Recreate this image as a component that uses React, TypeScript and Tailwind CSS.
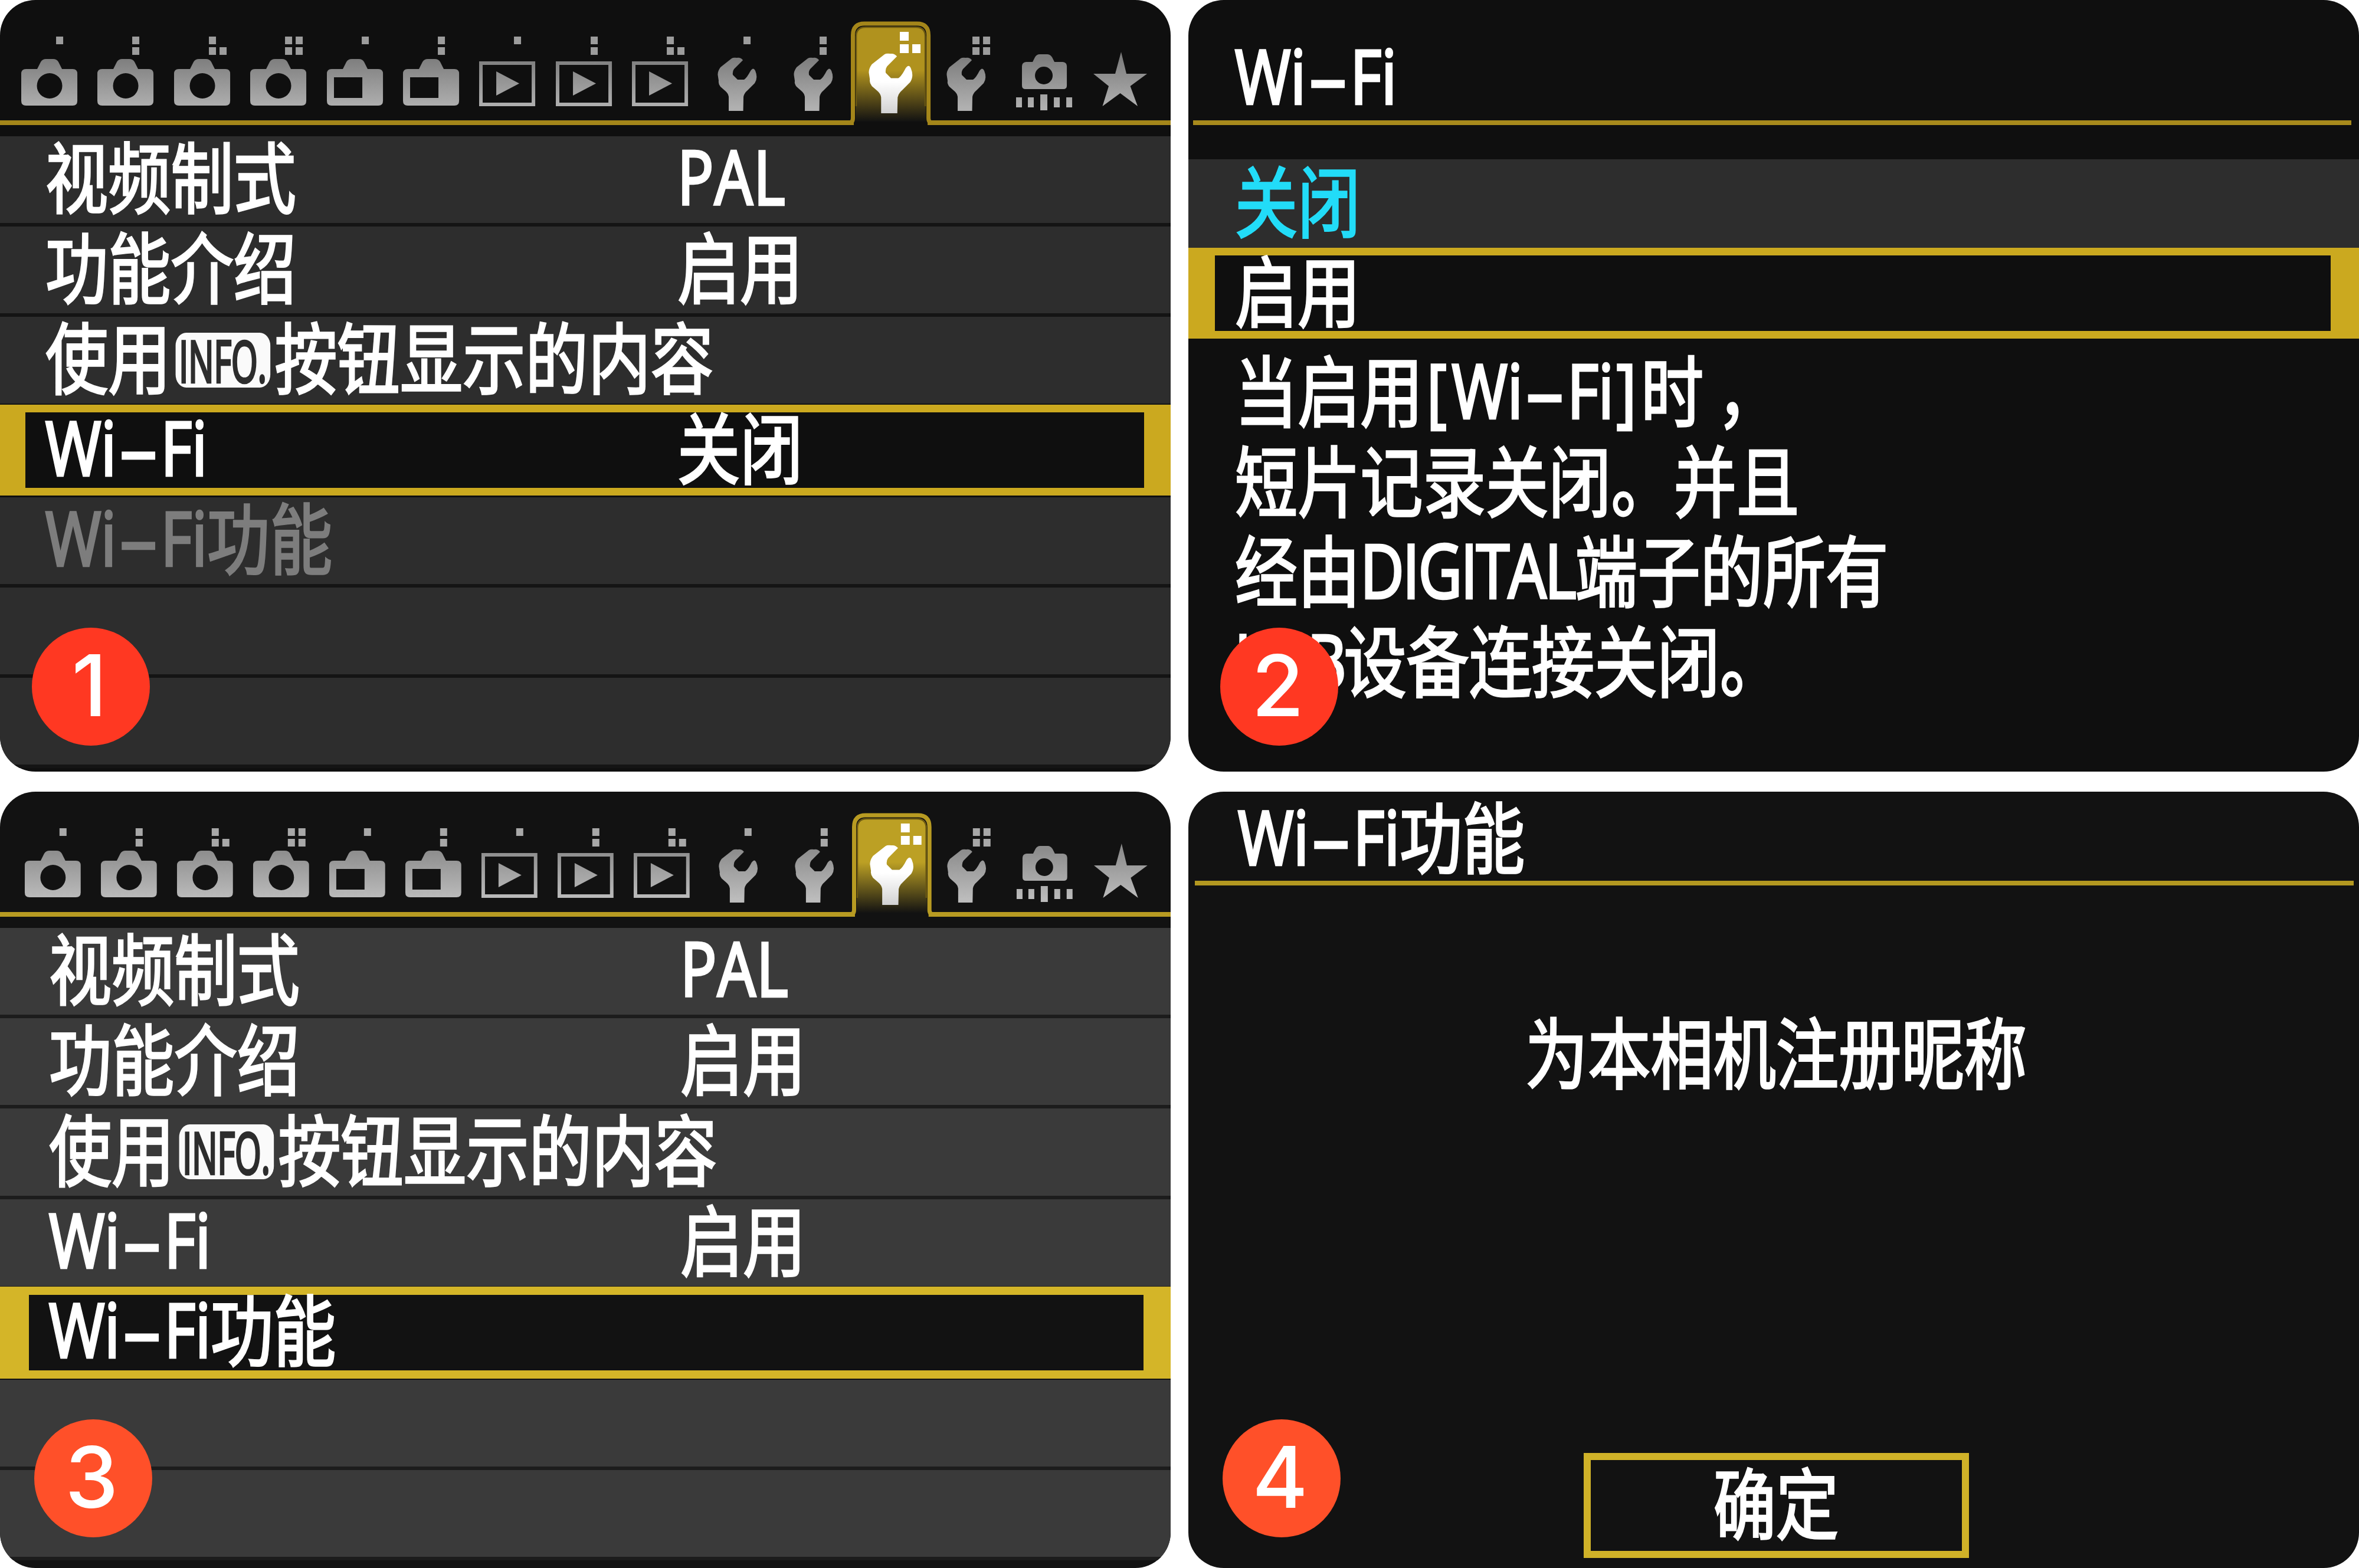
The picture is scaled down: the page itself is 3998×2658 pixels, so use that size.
import type { ReactNode } from "react";

type IconKind = "camera" | "movie" | "play" | "wrench" | "custom" | "star";

const tabs: { kind: IconKind; dots: number; active?: boolean }[] = [
  { kind: "camera", dots: 1 },
  { kind: "camera", dots: 2 },
  { kind: "camera", dots: 3 },
  { kind: "camera", dots: 4 },
  { kind: "movie", dots: 1 },
  { kind: "movie", dots: 2 },
  { kind: "play", dots: 1 },
  { kind: "play", dots: 2 },
  { kind: "play", dots: 3 },
  { kind: "wrench", dots: 1 },
  { kind: "wrench", dots: 2 },
  { kind: "wrench", dots: 3, active: true },
  { kind: "wrench", dots: 4 },
  { kind: "custom", dots: 0 },
  { kind: "star", dots: 0 },
];

// order in which the page dots of a tab fill up
const dotSpots = [
  [59, 62],
  [59, 80],
  [77, 80],
  [77, 62],
];

const WRENCH =
  "M48 98 Q54 97 58 102 L43 117 Q40 121 41 127 L49 135 L60 135 Q65 132 71 120 Q76 113 79 120 Q84 132 78 141 L66 153 Q60 158 59 164 L58.5 188 L34 188 L34 164 Q33 158 28 154 L20 147 Q16 142 17 137 L15.5 127 Q15 121 20 114 L39 99 Q42 97 48 98 Z";

const Glyph = ({ kind, fill }: { kind: IconKind; fill: string }) => {
  switch (kind) {
    case "camera":
      return (
        <path
          fill={fill}
          fillRule="evenodd"
          d="M27 117 L33 105 Q36 100 42 100 H54 Q60 100 63 105 L69 117 H87 Q95 117 95 125 V171 Q95 179 87 179 H8 Q0 179 0 171 V125 Q0 117 8 117 Z M48 124 A21 21 0 1 0 48 167 A21 21 0 1 0 48 124 Z"
        />
      );
    case "movie":
      return (
        <path
          fill={fill}
          fillRule="evenodd"
          d="M27 117 L33 105 Q36 100 42 100 H54 Q60 100 63 105 L69 117 H87 Q95 117 95 125 V171 Q95 179 87 179 H8 Q0 179 0 171 V125 Q0 117 8 117 Z M12 131 V166 H60 V131 Z"
        />
      );
    case "play":
      return (
        <>
          <rect x="3" y="107" width="89" height="70" fill="none" stroke={fill} strokeWidth="6" />
          <path fill={fill} d="M29 121 L68 141.500 L29 162 Z" />
        </>
      );
    case "wrench":
      return <path fill={fill} d={WRENCH} />;
    case "custom":
      return (
        <path
          fill={fill}
          fillRule="evenodd"
          d="M32 105 L36 97 Q39 92 44 92 H57 Q62 92 65 97 L69 105 H83 Q90 106 90 112 V145 Q90 151 84 151 H20 Q14 151 14 145 V112 Q14 106 21 105 Z M51 113 A15 15 0 1 0 51 143 A15 15 0 1 0 51 113 Z M4 165 h10 v17 h-10 Z M24 165 h10 v17 h-10 Z M45 160 h12 v27 h-12 Z M68 165 h10 v17 h-10 Z M89 165 h10 v17 h-10 Z"
        />
      );
    case "star":
      return (
        <path
          fill={fill}
          d="M53 88 L62 125 H97 L68.500 146 L81 180 L51.500 158 L21.500 180 L32 146 L6 125 H43 Z"
        />
      );
  }
};

const TabBar = ({ id, bright }: { id: string; bright?: boolean }) => {
  const gold = bright ? "#b89b22" : "#a4861a";
  const gray = `url(#${id}-gray)`;
  return (
    <div
      className={`relative flex h-[231px] shrink-0 ${bright ? "pl-[26px]" : "pl-[20px]"}`}
    >
      <div
        className={`absolute inset-x-0 top-[204px] h-2 ${bright ? "bg-[#b89b22]" : "bg-[#a4861a]"}`}
      />
      {tabs.map((tab, i) => (
        <svg
          key={i}
          viewBox="-16 0 129.3 231"
          preserveAspectRatio="none"
          className={`relative h-[231px] shrink-0 overflow-visible ${
            bright ? "w-[129px]" : "w-[129.4px]"
          }`}
        >
          {i === 0 && (
            <defs>
              <linearGradient id={`${id}-gray`} gradientUnits="userSpaceOnUse" x1="0" y1="98" x2="0" y2="182">
                <stop offset="0" stopColor={bright ? "#8c8c8c" : "#7d7d7d"} />
                <stop offset="1" stopColor={bright ? "#bcbcbc" : "#b0b0b0"} />
              </linearGradient>
              <linearGradient id={`${id}-gold`} gradientUnits="userSpaceOnUse" x1="0" y1="46" x2="0" y2="206">
                <stop offset="0" stopColor={bright ? "#bca024" : "#b0921e"} />
                <stop offset="0.46" stopColor={bright ? "#bca024" : "#b0921e"} />
                <stop offset="1" stopColor="#121212" />
              </linearGradient>
              <linearGradient id={`${id}-white`} gradientUnits="userSpaceOnUse" x1="0" y1="140" x2="0" y2="190">
                <stop offset="0" stopColor="#ffffff" />
                <stop offset="1" stopColor="#d0d0d0" />
              </linearGradient>
            </defs>
          )}
          {tab.active ? (
            <>
              <rect x="-12" y="196" width="125" height="18" fill={bright ? "#121212" : "#0f0f0f"} />
              <path
                d="M-20 208 Q-13.500 208 -13.500 200 V60 Q-13.500 40 6 40 H95 Q114.500 40 114.500 60 V200 Q114.500 208 121 208"
                fill="none"
                stroke={gold}
                strokeWidth="7"
              />
              <path
                d="M-9 206 V62 Q-9 45 8 45 H93 Q110 45 110 62 V206 Z"
                fill={`url(#${id}-gold)`}
              />
              <path
                d="M-8 180 V62 Q-8 46 8 46 H93 Q109 46 109 62 V180"
                fill="none"
                stroke="#6b5812"
                strokeWidth="2.500"
              />
              <rect x="66" y="54" width="15" height="15" fill="#fff" />
              <rect x="66" y="75" width="15" height="15" fill="#fff" />
              <rect x="87" y="75" width="14" height="15" fill="#fff" />
              <g transform="translate(50.5 141.5) scale(1.12) translate(-48.5 -143)">
                <Glyph kind="wrench" fill={`url(#${id}-white)`} />
              </g>
            </>
          ) : (
            <>
              {dotSpots.slice(0, tab.dots).map(([x, y]) => (
                <rect
                  key={`${x}-${y}`}
                  x={x}
                  y={y}
                  width="12"
                  height="13"
                  fill={bright ? "#a8a8a8" : "#9c9c9c"}
                />
              ))}
              <Glyph kind={tab.kind} fill={gray} />
            </>
          )}
        </svg>
      ))}
    </div>
  );
};

// The camera's font is narrow, so every line is squeezed horizontally
const Line = ({ children, className = "origin-left" }: { children: ReactNode; className?: string }) => (
  <div
    className={`w-max scale-x-[0.811] pb-[8px] text-[131px] leading-[144.7px] font-normal whitespace-nowrap [-webkit-text-stroke:3.4px_currentColor] ${className}`}
  >
    {children}
  </div>
);

const Latin = ({ children, className = "" }: { children: ReactNode; className?: string }) => (
  <span
    className={`align-[4px] text-[126px] leading-[0] font-medium [-webkit-text-stroke:4.5px_currentColor] ${className}`}
  >
    {children}
  </span>
);

const WiFi = () => (
  <Latin>
    Wi
    <span className="inline-block w-[93px] scale-x-[1.22] text-center">–</span>
    Fi
  </Latin>
);

const InfoLabel = () => (
  <span className="flex items-center">
    <span>使用</span>
    <span className="mt-[8px] mr-[9px] ml-[10px] flex h-[93px] w-[198px] items-center justify-center rounded-[22px] bg-[#fafafa] text-[#2d2d2d]">
      <span className="scale-x-[0.73] text-[97px] leading-[93px] [-webkit-text-stroke:4.5px_currentColor]">
        INFO.
      </span>
    </span>
    <span>按钮显示的内容</span>
  </span>
);

const Pal = () => <Latin className="tracking-[2px]">PAL</Latin>;

const Badge = ({ n, className }: { n: number; className: string }) => (
  <div
    className={`absolute top-[1064px] flex size-[200px] items-center justify-center rounded-full pr-[5px] pb-[4px] font-['Inter',sans-serif] text-[144px] leading-none font-medium text-white ${className}`}
  >
    {n}
  </div>
);

const Screen = ({ children, className }: { children: ReactNode; className: string }) => (
  <section
    className={`relative flex w-[1984px] flex-col overflow-hidden rounded-[60px] ${className}`}
  >
    {children}
  </section>
);

type Item = { label: ReactNode; value?: ReactNode; state?: "active" | "disabled" };

const MenuScreen = ({ id, items, bright, n }: { id: string; items: Item[]; bright?: boolean; n: number }) => {
  const textPad = bright ? "pl-[83px]" : "pl-[77px]";
  const labelWidth = bright ? "w-[1070px]" : "w-[1071px]";
  return (
    <Screen className={bright ? "h-[1316px] bg-[#121212]" : "h-[1308px] bg-[#0f0f0f]"}>
      <TabBar id={id} bright={bright} />
      {items.map((item, i) => {
        const content = (
          <>
            <div className={`shrink-0 ${labelWidth}`}>
              <Line>{item.label}</Line>
            </div>
            {item.value && <Line>{item.value}</Line>}
          </>
        );
        if (item.state === "active") {
          return (
            <div
              key={i}
              className={`relative flex shrink-0 ${
                bright
                  ? "-mt-[5px] mb-[2px] h-[156px] bg-[#d4b528] py-[14px] pr-[46px] pl-[49px]"
                  : "-mt-[4px] mb-[3px] h-[154px] bg-[#cba91f] py-[13px] pr-[45px] pl-[43px]"
              }`}
            >
              <div
                className={`flex flex-1 items-center pl-[34px] ${bright ? "bg-[#121212]" : "bg-[#0f0f0f]"}`}
              >
                {content}
              </div>
            </div>
          );
        }
        return (
          <div
            key={i}
            className={`flex shrink-0 items-center border-b-[6px] ${textPad} ${
              bright
                ? "h-[153.2px] border-[#1c1c1c] bg-[#3a3a3a]"
                : "h-[153px] border-[#141414] bg-[#2d2d2d]"
            } ${item.state === "disabled" ? "text-[#7d7d7d]" : "text-white"}`}
          >
            {content}
          </div>
        );
      })}
      <Badge n={n} className={bright ? "left-[58px] bg-[#ff5029]" : "left-[54px] bg-[#ff3822]"} />
    </Screen>
  );
};

const menuOff: Item[] = [
  { label: "视频制式", value: <Pal /> },
  { label: "功能介绍", value: "启用" },
  { label: <InfoLabel /> },
  { label: <WiFi />, value: "关闭", state: "active" },
  { label: <><WiFi />功能</>, state: "disabled" },
  { label: "" },
  { label: "" },
];

const menuOn: Item[] = [
  { label: "视频制式", value: <Pal /> },
  { label: "功能介绍", value: "启用" },
  { label: <InfoLabel /> },
  { label: <WiFi />, value: "启用" },
  { label: <><WiFi />功能</>, state: "active" },
  { label: "" },
  { label: "" },
];

const WifiSettingScreen = () => (
  <Screen className="h-[1308px] bg-[#0f0f0f]">
    <div className="flex h-[204px] shrink-0 items-center pt-[62px] pl-[79px]">
      <Line><WiFi /></Line>
    </div>
    <div className="mr-[13px] ml-[8px] h-2 shrink-0 bg-[#a88a1c]" />
    <div className="mt-[58px] flex h-[150px] shrink-0 items-center bg-[#2d2d2d] pl-[79px] text-[#22dcf8]">
      <Line>关闭</Line>
    </div>
    <div className="flex h-[154px] shrink-0 bg-[#cba91f] py-[13px] pr-[48px] pl-[45px]">
      <div className="flex flex-1 items-center bg-[#0f0f0f] pl-[34px]">
        <Line>启用</Line>
      </div>
    </div>
    <div className="flex flex-col pt-[16px] pl-[79px]">
      <Line>
        当启用
        <Latin className="mr-[11px] ml-[8px]">[</Latin>
        <WiFi />
        <Latin className="mr-[10px] ml-[6px]">]</Latin>
        时<span className="ml-[28px]">，</span>
      </Line>
      <Line>短片记录关闭。并且</Line>
      <Line>
        经由<Latin className="tracking-[-2.8px]">DIGITAL</Latin>端子的所有
      </Line>
      <Line>
        <Latin className="tracking-[-5px]">USB</Latin>设备连接关闭。
      </Line>
    </div>
    <Badge n={2} className="left-[54px] bg-[#ff3822]" />
  </Screen>
);

const NicknameScreen = () => (
  <Screen className="h-[1316px] items-center bg-[#121212]">
    <div className="flex h-[151px] w-full shrink-0 items-center pt-[11px] pl-[84px]">
      <Line><WiFi />功能</Line>
    </div>
    <div className="ml-[2px] h-2 w-[1964px] shrink-0 bg-[#b39820]" />
    <div className="flex flex-1 flex-col items-center pt-[211px] pl-[8px]">
      <Line className="origin-center">为本相机注册昵称</Line>
    </div>
    <button
      type="button"
      className="mb-[17px] ml-[9px] flex h-[178px] w-[653px] shrink-0 items-center justify-center border-[12px] border-[#d0b228] text-white"
    >
      <Line className="origin-center">确定</Line>
    </button>
    <Badge n={4} className="left-[58px] bg-[#ff5029]" />
  </Screen>
);

const App = () => {
  return (
    <main className="grid h-[2658px] w-[3998px] grid-cols-[1984px_1984px] grid-rows-[1308px_1316px] gap-x-[30px] gap-y-[34px] overflow-hidden bg-white font-['Open_Sans','Noto_Sans_CJK_SC',sans-serif] text-white">
      <MenuScreen id="off" items={menuOff} n={1} />
      <WifiSettingScreen />
      <MenuScreen id="on" items={menuOn} bright n={3} />
      <NicknameScreen />
    </main>
  );
};

export default App;
